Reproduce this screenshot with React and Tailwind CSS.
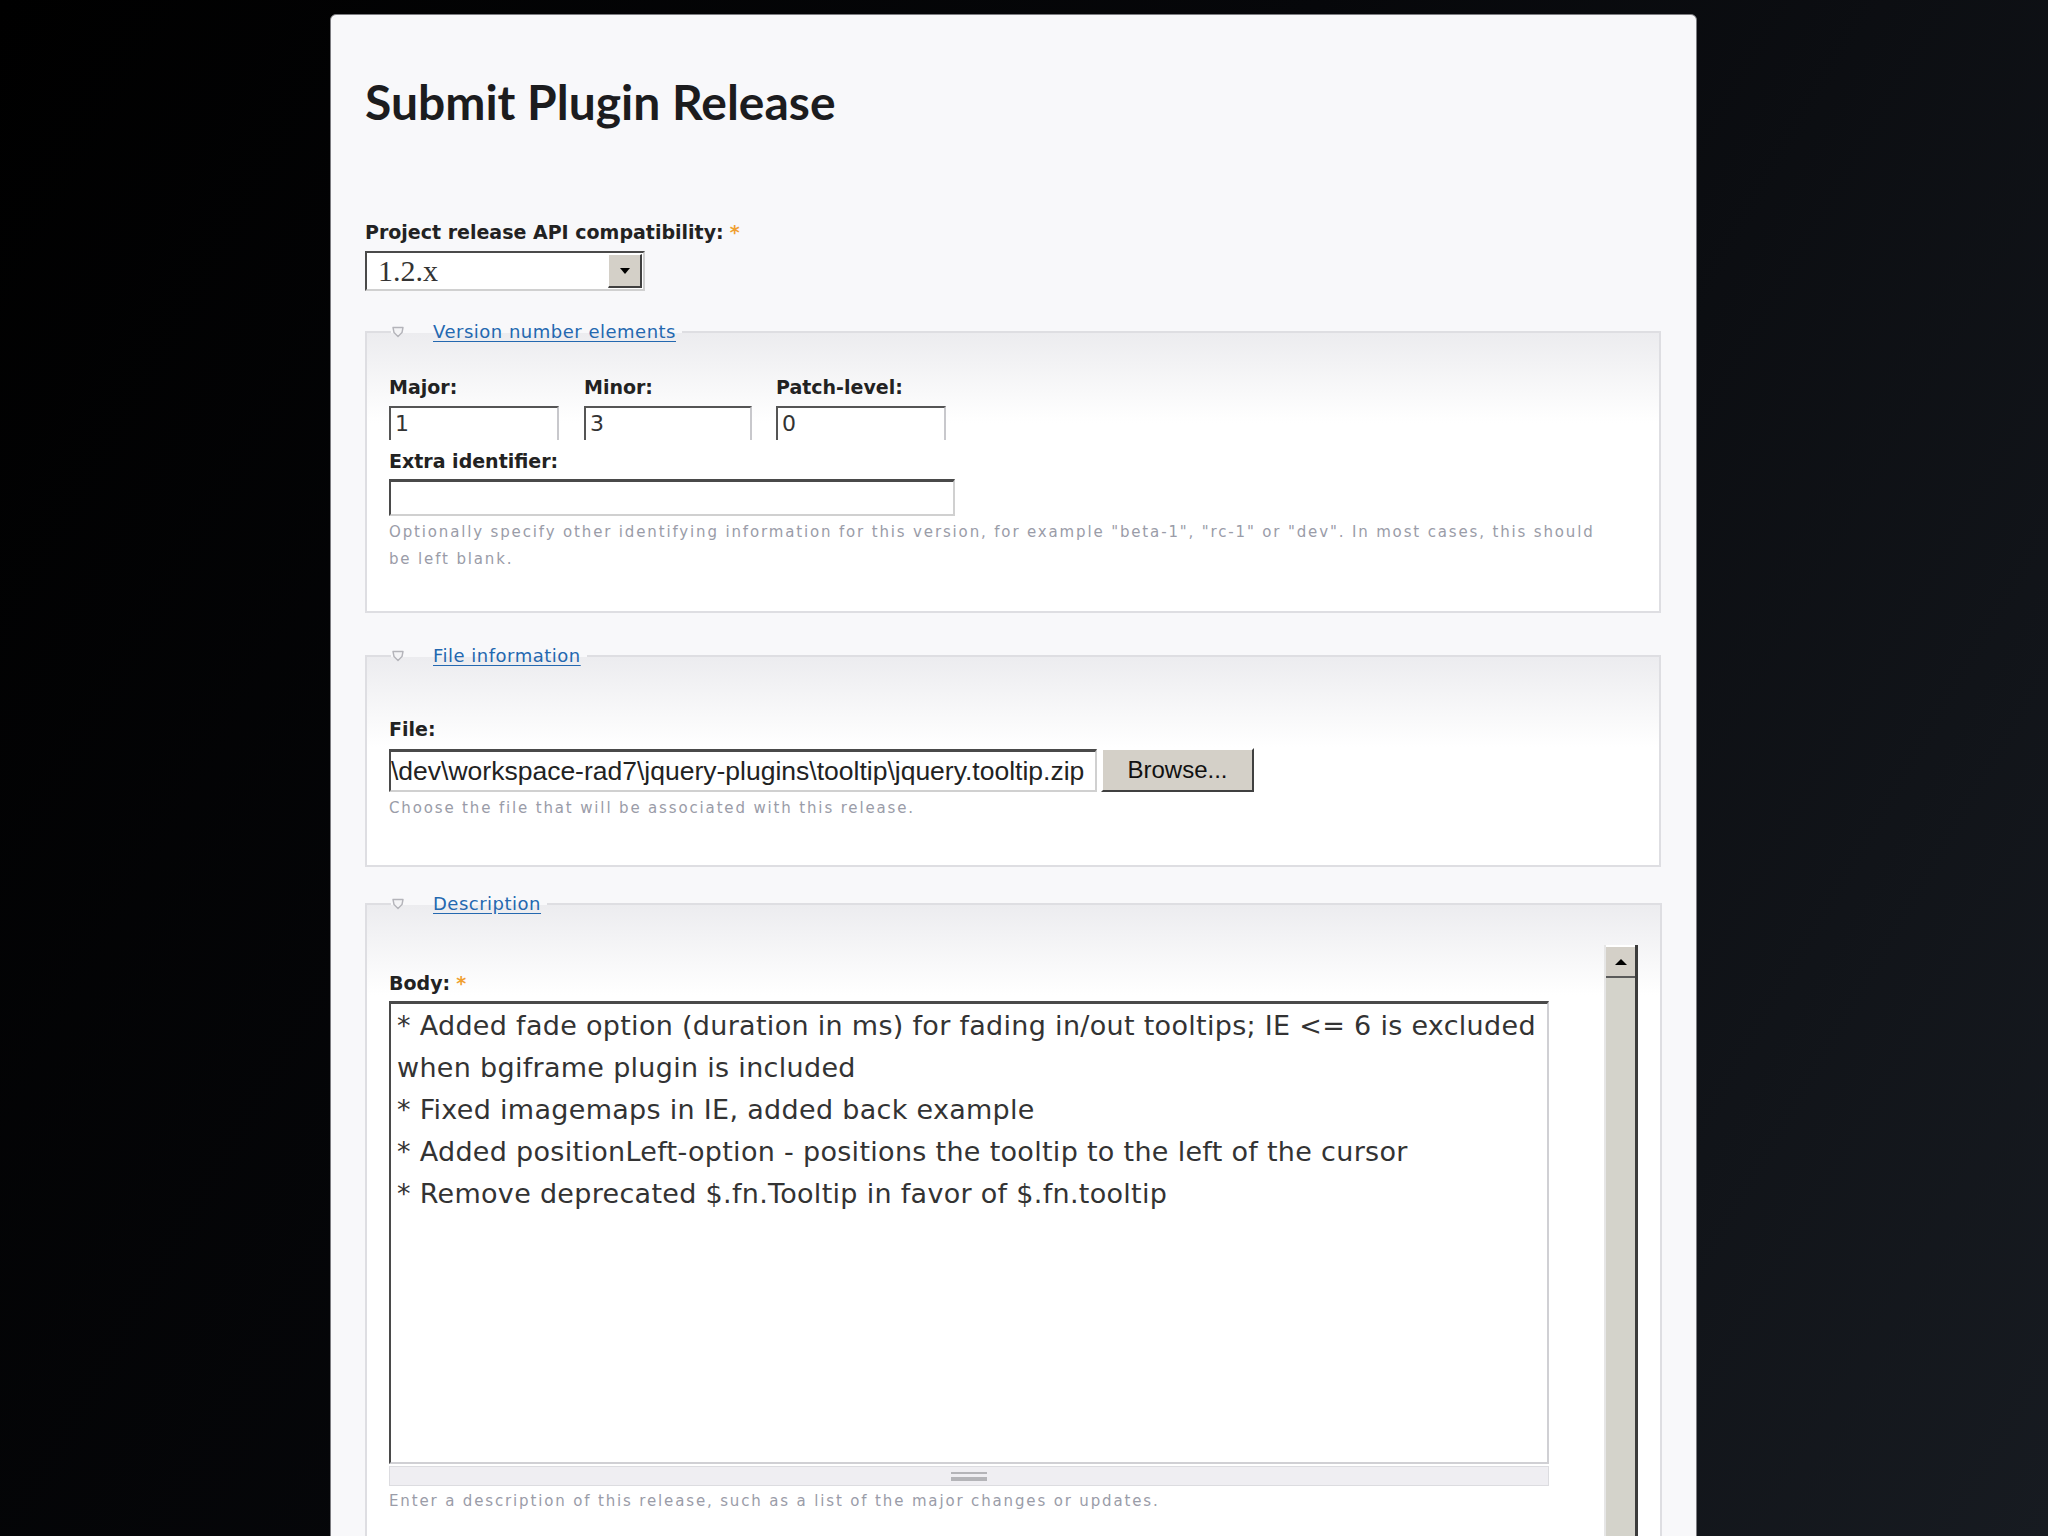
import React from 'react'

const label = "block text-[19px] leading-[20px] font-bold text-[#222] [font-family:'DejaVu_Sans',sans-serif]"
const help = "text-[15px] leading-[27px] tracking-[1.85px] text-[#9a9ca8] [font-family:'DejaVu_Sans',sans-serif]"

function Legend({ children }) {
  return (
    <legend className="flex items-center h-[20px] ml-[2px] pr-[6px]">
      <svg width="14" height="14" viewBox="0 0 14 14" className="mr-[28px]">
        <path d="M2 2.5h10l-1 5-4 4-4-4z" fill="#f4f4f6" stroke="#b4b4ba" strokeWidth="1.4" strokeLinejoin="round" />
      </svg>
      <a href="#" className="text-[18px] leading-[20px] tracking-[0.5px] text-[#2468b0] underline underline-offset-[3px] [font-family:'DejaVu_Sans',sans-serif]">
        {children}
      </a>
    </legend>
  )
}

function Required() {
  return <span className="text-[#f0a030] ml-[6px]">*</span>
}

function SmallInput({ value, className = '' }) {
  return (
    <div className={`h-[34px] bg-white border-t-2 border-l-2 border-r-2 border-t-[#555] border-l-[#555] border-r-[#c8c8cc] pl-[4px] text-[22px] leading-[32px] text-[#333] [font-family:'DejaVu_Sans',sans-serif] ${className}`}>
      {value}
    </div>
  )
}

export default function App() {
  return (
    <div className="w-[2048px] h-[1536px] overflow-hidden bg-[linear-gradient(120deg,#000_0%,#06070a_45%,#171b21_100%)] pt-[14px] pl-[330px]">
      <div className="w-[1367px] min-h-[1600px] rounded-t-[6px] border border-[#7c7c80] bg-[#f8f8fa] pt-[63px] pl-[34px] pr-[35px]">
        <h1 className="text-[48px] leading-[48px] font-bold text-[#1c1c1e] [font-family:Lato,sans-serif]">
          Submit Plugin Release
        </h1>

        <label className={`${label} mt-[96px]`}>
          Project release API compatibility:<Required />
        </label>
        <div className="mt-[9px] w-[280px] h-[40px] flex bg-white border-2 border-t-[#4a4a4a] border-l-[#4a4a4a] border-b-[#d0d0d0] border-r-[#d0d0d0]">
          <div className="flex-1 pl-[11px] text-[30px] leading-[36px] text-[#333] [font-family:'Liberation_Serif',serif]">1.2.x</div>
          <div className="w-[34px] h-[34px] mt-[1px] mr-[1px] flex items-center justify-center bg-[#d4d0c8] border-t border-l border-t-white border-l-white border-b-2 border-r-2 border-b-[#404040] border-r-[#404040]">
            <svg width="12" height="8" viewBox="0 0 12 8"><path d="M1 1h10L6 7z" fill="#000" /></svg>
          </div>
        </div>

        <fieldset className="mt-[31px] border-2 border-[#dedee2] bg-[linear-gradient(#ececef,#ffffff_90px)] pl-[22px] pr-[22px] pb-[38px]">
          <Legend>Version number elements</Legend>
          <div className="flex mt-[35px]">
            <div className="w-[170px] mr-[25px]">
              <label className={label}>Major:</label>
              <SmallInput value="1" className="mt-[9px]" />
            </div>
            <div className="w-[168px] mr-[24px]">
              <label className={label}>Minor:</label>
              <SmallInput value="3" className="mt-[9px]" />
            </div>
            <div className="w-[170px]">
              <label className={label}>Patch-level:</label>
              <SmallInput value="0" className="mt-[9px] text-[#8a8a90]" />
            </div>
          </div>
          <label className={`${label} mt-[11px]`}>Extra identifier:</label>
          <div className="mt-[8px] w-[566px] h-[37px] bg-white border-2 border-t-[3px] border-t-[#4a4a4a] border-l-[#4a4a4a] border-b-[#d0d0d0] border-r-[#d0d0d0]" />
          <p className={`${help} mt-[3px]`}>
            Optionally specify other identifying information for this version, for example "beta-1", "rc-1" or "dev". In most cases, this should
            <br />
            be left blank.
          </p>
        </fieldset>

        <fieldset className="mt-[33px] border-2 border-[#dedee2] bg-[linear-gradient(#ececef,#ffffff_90px)] pl-[22px] pr-[22px] pb-[47px]">
          <Legend>File information</Legend>
          <label className={`${label} mt-[53px]`}>File:</label>
          <div className="mt-[9px] flex items-center">
            <div className="w-[708px] h-[43px] overflow-hidden bg-white border-2 border-t-[3px] border-t-[#4a4a4a] border-l-[#4a4a4a] border-b-[#d0d0d0] border-r-[#d0d0d0]">
              <span className="whitespace-nowrap text-[26.5px] leading-[38px] text-[#222] [font-family:'Liberation_Sans',sans-serif]">
                \dev\workspace-rad7\jquery-plugins\tooltip\jquery.tooltip.zip
              </span>
            </div>
            <button className="ml-[4px] w-[153px] h-[44px] bg-[#d4d0c8] border-2 border-t-white border-l-white border-b-[#404040] border-r-[#404040] text-[24px] text-[#111] [font-family:'Liberation_Sans',sans-serif]">
              Browse...
            </button>
          </div>
          <p className={`${help} !leading-[20px] mt-[6px]`}>Choose the file that will be associated with this release.</p>
        </fieldset>

        <fieldset className="mt-[27px] border-2 border-[#dedee2] bg-[linear-gradient(#ececef,#ffffff_90px)] pl-[22px] pr-[22px] pb-[40px]">
          <Legend>Description</Legend>
          <div className="flex items-start">
            <div className="w-[1160px]">
              <label className={`${label} mt-[59px]`}>Body:<Required /></label>
              <div className="mt-[8px] h-[463px] bg-white border-2 border-t-[3px] border-t-[#4a4a4a] border-l-[#4a4a4a] border-b-[#d0d0d4] border-r-[#d0d0d4] pl-[6px] pt-[1px] text-[27px] leading-[42px] tracking-[0.3px] text-[#333] [font-family:'DejaVu_Sans',sans-serif]">
                <div>* Added fade option (duration in ms) for fading in/out tooltips; IE &lt;= 6 is excluded when bgiframe plugin is included</div>
                <div>* Fixed imagemaps in IE, added back example</div>
                <div>* Added positionLeft-option - positions the tooltip to the left of the cursor</div>
                <div>* Remove deprecated $.fn.Tooltip in favor of $.fn.tooltip</div>
              </div>
              <div className="mt-[2px] h-[20px] flex items-center justify-center bg-[#efeef2] border border-[#dcdce0]">
                <div className="w-[36px] flex flex-col gap-[3px]">
                  <div className="h-[2px] bg-[#b4b4b8]" />
                  <div className="h-[4px] bg-[#b4b4b8]" />
                </div>
              </div>
              <p className={`${help} !leading-[20px] mt-[5px]`}>Enter a description of this release, such as a list of the major changes or updates.</p>
            </div>
            <div className="ml-[55px] mt-[31px] w-[34px] h-[700px] flex flex-col bg-[#d4d3cb] border-l-2 border-l-[#e6e6e6] border-r-[3px] border-r-[#3c3c3c]">
              <div className="h-[33px] flex items-center justify-center border-t-2 border-t-white border-b-2 border-b-[#5a5a5a] bg-[#d4d0c8]">
                <svg width="14" height="8" viewBox="0 0 14 8"><path d="M1 7h12L7 1z" fill="#000" /></svg>
              </div>
            </div>
          </div>
        </fieldset>
      </div>
    </div>
  )
}
